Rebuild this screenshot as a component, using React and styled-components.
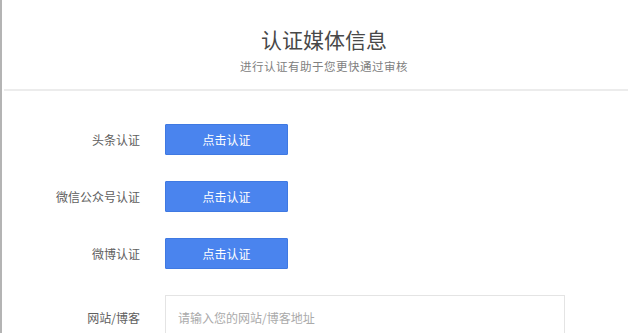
import styled, { createGlobalStyle } from "styled-components";

const GlobalStyle = createGlobalStyle`
  html, body {
    margin: 0;
    padding: 0;
    background: #fff;
    font-family: "Microsoft YaHei", "Noto Sans CJK SC", "Liberation Sans", sans-serif;
  }
`;

const rows = [
  { label: "头条认证" },
  { label: "微信公众号认证" },
  { label: "微博认证" },
];

export default function App() {
  return (
    <>
      <GlobalStyle />
      <Page>
        <Header>
          <Title>认证媒体信息</Title>
          <Subtitle>进行认证有助于您更快通过审核</Subtitle>
        </Header>
        <Divider />
        <Form>
          {rows.map((row) => (
            <Row key={row.label}>
              <Label>{row.label}</Label>
              <AuthButton type="button">点击认证</AuthButton>
            </Row>
          ))}
          <Row>
            <Label>网站/博客</Label>
            <UrlInput placeholder="请输入您的网站/博客地址" />
          </Row>
        </Form>
      </Page>
    </>
  );
}

const Page = styled.div`
  height: 333px;
  overflow: hidden;
  border-left: 2px solid #b4b4b4;
  box-sizing: border-box;
`;

const Header = styled.div`
  display: flex;
  flex-direction: column;
  align-items: center;
  padding: 25px 0 0 18px;
  height: 65px;
  box-sizing: border-box;
`;

const Title = styled.h1`
  margin: 0;
  font-size: 21px;
  line-height: 28px;
  font-weight: 400;
  color: #484848;
`;

const Subtitle = styled.p`
  margin: 6px 0 0;
  font-size: 11.5px;
  line-height: 14px;
  color: #808080;
  letter-spacing: 0.5px;
`;

const Divider = styled.div`
  margin: 24px 0 0 2px;
  height: 2px;
  background: #ececec;
`;

const Form = styled.div`
  display: flex;
  flex-direction: column;
  gap: 26px;
  padding-top: 33px;
`;

const Row = styled.div`
  display: grid;
  grid-template-columns: 138px 1fr;
  column-gap: 25px;
  align-items: center;
`;

const Label = styled.span`
  text-align: right;
  font-size: 12px;
  color: #5e5e5e;
`;

const AuthButton = styled.button`
  width: 123px;
  height: 31px;
  background: #4a84ee;
  border: 1px solid #3f79e2;
  border-radius: 1px;
  color: #fff;
  font-family: inherit;
  font-size: 12px;
  padding: 0;
  cursor: pointer;
`;

const UrlInput = styled.input`
  width: 400px;
  height: 44px;
  box-sizing: border-box;
  border: 1px solid #e4e4e4;
  padding: 0 12px;
  font-family: inherit;
  font-size: 12px;
  color: #333;
  outline: none;

  &::placeholder {
    color: #aaa;
  }
`;
